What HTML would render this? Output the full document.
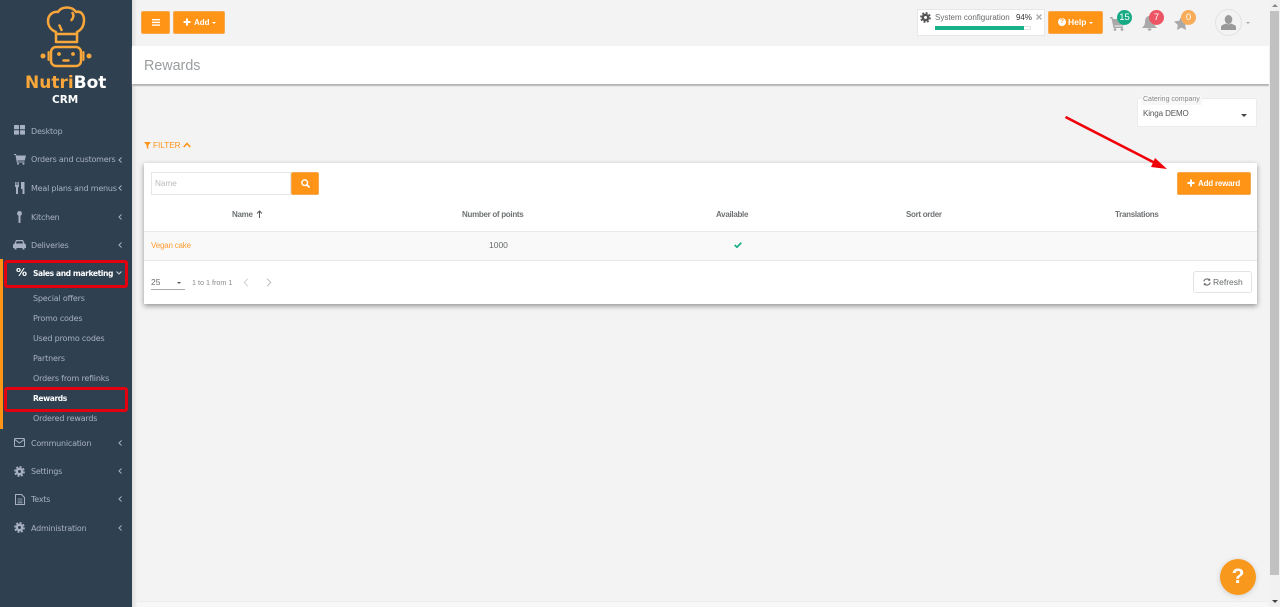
<!DOCTYPE html>
<html><head><meta charset="utf-8"><style>
*{box-sizing:border-box}
html,body{margin:0;padding:0;width:1280px;height:607px;overflow:hidden;background:#f3f3f4;font-family:"Liberation Sans",sans-serif;color:#676a6c}
.a{position:absolute;white-space:nowrap}
.nav{font-family:"DejaVu Sans","Liberation Sans",sans-serif;font-size:8px;letter-spacing:-.22px;color:#a7b1c2;left:31px;line-height:12px}
.sub{font-family:"DejaVu Sans","Liberation Sans",sans-serif;font-size:8px;letter-spacing:-.18px;color:#a7b1c2;left:33px;line-height:12px}
.act{font-family:"DejaVu Sans",sans-serif;font-weight:bold;font-size:7.6px;letter-spacing:-.42px;color:#fff}
.chev{left:118px;width:4px;height:6px}
.ic{position:absolute}
.btn{position:absolute;background:#ff9417;border:1px solid #f5a94e;border-radius:2px;color:#fff;font-weight:bold;font-size:9px;text-align:center}
.th{font-size:8px;font-weight:bold;letter-spacing:-.3px;color:#6f7274;line-height:12px}
.badge{position:absolute;border-radius:50%;width:15px;height:15px;color:#fff;font-size:9.5px;text-align:center;line-height:15px}
</style></head><body>
<!-- sidebar -->
<div class="a" style="left:0;top:0;width:132px;height:607px;background:#2f4050"></div>
<div class="a" style="left:132px;top:0;width:5px;height:607px;background:linear-gradient(90deg,#ddd,#f3f3f4)"></div>
<div class="a" style="left:0;top:259px;width:3px;height:170px;background:#ff9417"></div>
<svg class="ic" style="left:0;top:0" width="132" height="72" viewBox="0 0 132 72" fill="none" stroke="#f9a63a" stroke-width="2.500" stroke-linejoin="round" stroke-linecap="round">
<path d="M56 32C51 30 48 26 48 21C48 15 53 11 58 12C60 8.500 64 7.500 67 7.500C71 7.500 74 9 76 12C81 10.500 84 15 84 20C84 26 81 30 77 32V42H56Z"/>
<path d="M56 34H77"/><path d="M59.500 25.500L61.500 30"/><path d="M72.500 13C74 15 73.500 18 71.500 20"/>
<rect x="51" y="47" width="30" height="19" rx="5"/>
<path d="M63.500 60.500H68.500" stroke-width="2.400"/>
<path d="M48.500 52V60M83.500 52V60" stroke-width="2"/>
<circle cx="59" cy="54" r="1.400" fill="#f9a63a" stroke-width="1"/><circle cx="73" cy="54" r="1.400" fill="#f9a63a" stroke-width="1"/>
<circle cx="43" cy="56" r="1.300" fill="#f9a63a"/><circle cx="89" cy="56" r="1.300" fill="#f9a63a"/>
</svg>
<div class="a" style="left:25px;top:74px;font-family:'DejaVu Sans',sans-serif;font-weight:bold;font-size:17px;line-height:19px"><span style="color:#f9a63a">Nutri</span><span style="color:#fff">Bot</span></div>
<div class="a" style="left:52px;top:93px;font-family:'DejaVu Sans',sans-serif;font-weight:bold;font-size:10.500px;line-height:14px;color:#fff">CRM</div>

<svg class="ic" style="left:14px;top:125px" width="11" height="10" viewBox="0 0 11 10" fill="#a7b1c2"><rect width="5" height="4.300" rx=".6"/><rect x="6" width="5" height="4.300" rx=".6"/><rect y="5.300" width="5" height="4.300" rx=".6"/><rect x="6" y="5.300" width="5" height="4.300" rx=".6"/></svg>
<div class="a nav" style="top:126px">Desktop</div>
<svg class="ic" style="left:14px;top:154px" width="12" height="11" viewBox="0 0 12 11" fill="#a7b1c2"><path d="M0 0H2L2.500 1.500H12L10.800 6.500H3.500L3.700 7.500H10.500V8.500H2.800L1.500 1H0Z"/><circle cx="4" cy="9.800" r="1"/><circle cx="9.500" cy="9.800" r="1"/></svg>
<div class="a nav" style="top:154px">Orders and customers</div>
<svg class="ic" style="left:15px;top:182px" width="10" height="12" viewBox="0 0 10 12" fill="#a7b1c2"><path d="M0 0H.8V3H1.500V0H2.500V3H3.200V0H4V4.500L3 5.500V12H1V5.500L0 4.500Z"/><path d="M6 0H9.500V12H7.500V7H6Z"/></svg>
<div class="a nav" style="top:183px">Meal plans and menus</div>
<svg class="ic" style="left:17px;top:211px" width="5" height="12" viewBox="0 0 5 12" fill="#a7b1c2"><ellipse cx="2.500" cy="2.500" rx="2.400" ry="2.500"/><rect x="1.500" y="4" width="2" height="8" rx=".8"/></svg>
<div class="a nav" style="top:212px">Kitchen</div>
<svg class="ic" style="left:13px;top:239px" width="13" height="11" viewBox="0 0 13 11" fill="#a7b1c2"><path d="M3 1H10L11.500 4.500C12.500 5 13 5.500 13 6.500V9H11.500V10.500H9.500V9H3.500V10.500H1.500V9H0V6.500C0 5.500 .5 5 1.500 4.500ZM3.700 2.300L2.900 4.500H10.100L9.300 2.300Z"/></svg>
<div class="a nav" style="top:240px">Deliveries</div>
<div class="a" style="left:16px;top:266px;font-family:'DejaVu Sans',sans-serif;font-weight:bold;font-size:11px;line-height:14px;color:#fff;letter-spacing:-.3px">%</div>
<div class="a sub act" style="top:268px">Sales and marketing</div>
<svg class="ic" style="left:116px;top:271px" width="6" height="4" viewBox="0 0 6 4" fill="none" stroke="#c9d0da" stroke-width="1"><path d="M.5 .5L3 3L5.500 .5"/></svg>
<div class="a sub" style="top:293px">Special offers</div>
<div class="a sub" style="top:313px">Promo codes</div>
<div class="a sub" style="top:333px">Used promo codes</div>
<div class="a sub" style="top:353px">Partners</div>
<div class="a sub" style="top:373px">Orders from reflinks</div>
<div class="a sub act" style="top:393px">Rewards</div>
<div class="a sub" style="top:413px">Ordered rewards</div>
<svg class="ic" style="left:14px;top:438px" width="11" height="9" viewBox="0 0 11 9" fill="none" stroke="#a7b1c2" stroke-width="1"><rect x=".5" y=".5" width="10" height="8" rx="1"/><path d="M.8 1.500L5.500 5L10.200 1.500"/></svg>
<div class="a nav" style="top:438px">Communication</div>
<svg class="ic" style="left:14px;top:466px" width="11" height="11" viewBox="0 0 11 11"><circle cx="5.500" cy="5.500" r="3.900" fill="#a7b1c2"/><circle cx="5.500" cy="5.500" r="4.600" fill="none" stroke="#a7b1c2" stroke-width="1.600" stroke-dasharray="2 1.610"/><circle cx="5.500" cy="5.500" r="1.500" fill="#2f4050"/></svg>
<div class="a nav" style="top:466px">Settings</div>
<svg class="ic" style="left:15px;top:494px" width="10" height="11" viewBox="0 0 10 11" fill="none" stroke="#a7b1c2" stroke-width="1"><path d="M.5 .5H6.500L9.500 3.500V10.500H.5Z"/><path d="M2.500 5H7.500M2.500 7H7.500M2.500 8.800H7.500" stroke-width=".8"/></svg>
<div class="a nav" style="top:494px">Texts</div>
<svg class="ic" style="left:14px;top:522px" width="11" height="11" viewBox="0 0 11 11"><circle cx="5.500" cy="5.500" r="3.900" fill="#a7b1c2"/><circle cx="5.500" cy="5.500" r="4.600" fill="none" stroke="#a7b1c2" stroke-width="1.600" stroke-dasharray="2 1.610"/><circle cx="5.500" cy="5.500" r="1.500" fill="#2f4050"/></svg>
<div class="a nav" style="top:523px">Administration</div>
<svg class="ic chev" style="top:157px" viewBox="0 0 4 6" fill="none" stroke="#a7b1c2"><path d="M3.500 .5L1 3L3.500 5.500"/></svg>
<svg class="ic chev" style="top:185px" viewBox="0 0 4 6" fill="none" stroke="#a7b1c2"><path d="M3.500 .5L1 3L3.500 5.500"/></svg>
<svg class="ic chev" style="top:214px" viewBox="0 0 4 6" fill="none" stroke="#a7b1c2"><path d="M3.500 .5L1 3L3.500 5.500"/></svg>
<svg class="ic chev" style="top:242px" viewBox="0 0 4 6" fill="none" stroke="#a7b1c2"><path d="M3.500 .5L1 3L3.500 5.500"/></svg>
<svg class="ic chev" style="top:440px" viewBox="0 0 4 6" fill="none" stroke="#a7b1c2"><path d="M3.500 .5L1 3L3.500 5.500"/></svg>
<svg class="ic chev" style="top:468px" viewBox="0 0 4 6" fill="none" stroke="#a7b1c2"><path d="M3.500 .5L1 3L3.500 5.500"/></svg>
<svg class="ic chev" style="top:496px" viewBox="0 0 4 6" fill="none" stroke="#a7b1c2"><path d="M3.500 .5L1 3L3.500 5.500"/></svg>
<svg class="ic chev" style="top:525px" viewBox="0 0 4 6" fill="none" stroke="#a7b1c2"><path d="M3.500 .5L1 3L3.500 5.500"/></svg>
<!-- red highlights -->
<div class="a" style="left:4px;top:260px;width:124px;height:28px;border:3px solid #e3000f;border-radius:3px"></div>
<div class="a" style="left:4px;top:387px;width:124px;height:25px;border:3px solid #e3000f;border-radius:3px"></div>

<!-- top bar -->
<div class="btn" style="left:141px;top:11px;width:29px;height:23px"></div>
<svg class="ic" style="left:152px;top:19px" width="8" height="7" viewBox="0 0 8 7" fill="#fff"><rect width="8" height="1.400"/><rect y="2.700" width="8" height="1.400"/><rect y="5.400" width="8" height="1.400"/></svg>
<div class="btn" style="left:173px;top:11px;width:52px;height:23px"></div>
<svg class="ic" style="left:183px;top:18px" width="8" height="8" viewBox="0 0 8 8" fill="#fff"><path d="M3 .5H5V3H7.500V5H5V7.500H3V5H.5V3H3Z"/></svg>
<div class="a" style="left:194px;top:17px;font-size:8px;font-weight:bold;color:#fff;line-height:12px">Add</div>
<div class="a" style="left:212px;top:22px;border:2px solid transparent;border-top-color:#fff;border-bottom:0"></div>

<div class="a" style="left:917px;top:9px;width:128px;height:27px;background:#fff;border:1px solid #e7e7e7"></div>
<svg class="ic" style="left:920px;top:12px" width="11" height="11" viewBox="0 0 11 11"><circle cx="5.500" cy="5.500" r="3.900" fill="#555"/><circle cx="5.500" cy="5.500" r="4.600" fill="none" stroke="#555" stroke-width="1.600" stroke-dasharray="2 1.610"/><circle cx="5.500" cy="5.500" r="1.500" fill="#fff"/></svg>
<div class="a" style="left:935px;top:12px;font-size:8px;line-height:12px;color:#676a6c">System configuration</div>
<div class="a" style="left:1016px;top:12px;font-size:8px;letter-spacing:-.1px;line-height:12px;color:#333">94%</div>
<svg class="ic" style="left:1036px;top:14px" width="6" height="6" viewBox="0 0 6 6" stroke="#aaa" stroke-width="1.300"><path d="M.5 .5L5.500 5.500M5.500 .5L.5 5.500"/></svg>
<div class="a" style="left:935px;top:26px;width:96px;height:4px;border:1px solid #e5e5e5;background:#fff"></div>
<div class="a" style="left:935px;top:26px;width:89px;height:4px;background:#18b28a"></div>
<div class="btn" style="left:1048px;top:11px;width:55px;height:23px"></div>
<div class="a" style="left:1058px;top:18px;width:8px;height:8px;border-radius:50%;background:#fff"></div>
<div class="a" style="left:1058px;top:18px;width:8px;font-size:6.500px;font-weight:bold;color:#ff9417;line-height:8px;text-align:center">?</div>
<div class="a" style="left:1068px;top:16px;font-size:8.500px;font-weight:bold;color:#fff;line-height:12px">Help</div>
<div class="a" style="left:1089px;top:22px;border:2px solid transparent;border-top-color:#fff;border-bottom:0"></div>

<svg class="ic" style="left:1110px;top:17px" width="15" height="14" viewBox="0 0 15 14" fill="#a9a9a9"><path d="M0 0H2.500L3 2H15L13.500 8.500H4.500L4.700 9.500H13V11H3.500L1.500 1.500H0Z"/><circle cx="5" cy="12.500" r="1.400"/><circle cx="12" cy="12.500" r="1.400"/></svg>
<div class="badge" style="left:1117px;top:10px;background:#16ab85">15</div>
<svg class="ic" style="left:1142px;top:16px" width="15" height="15" viewBox="0 0 15 15" fill="#a9a9a9"><path d="M7.500 0C11 0 12 3 12 6C12 9 13.500 10.500 15 12H0C1.500 10.500 3 9 3 6C3 3 4 0 7.500 0Z"/><path d="M5.500 12.500H9.500C9.500 15.500 5.500 15.500 5.500 12.500Z"/></svg>
<div class="badge" style="left:1149px;top:10px;background:#ed5565">7</div>
<svg class="ic" style="left:1174px;top:16px" width="15" height="14" viewBox="0 0 15 14" fill="#a9a9a9"><path d="M7.500 0L9.800 4.700L15 5.400L11.200 9L12.100 14L7.500 11.600L2.900 14L3.800 9L0 5.400L5.200 4.700Z"/></svg>
<div class="badge" style="left:1181px;top:10px;background:#f8ac59">0</div>
<div class="a" style="left:1215px;top:9px;width:27px;height:27px;border-radius:50%;border:1px solid #e2e2e2;background:#f3f3f4"></div>
<svg class="ic" style="left:1221px;top:15px" width="15" height="15" viewBox="0 0 15 15" fill="#9a9a9a"><ellipse cx="7.500" cy="4.500" rx="3.800" ry="4.500"/><path d="M0 15V12C0 10 3 9.500 5 8.500C6.500 9.500 8.500 9.500 10 8.500C12 9.500 15 10 15 12V15Z"/></svg>
<div class="a" style="left:1246px;top:22px;border:2px solid transparent;border-top-color:#aaa;border-bottom:0"></div>

<!-- heading -->
<div class="a" style="left:132px;top:46px;width:1137px;height:38px;background:#fff;box-shadow:0 2px 1px #b5b5b5"></div>
<div class="a" style="left:144px;top:56px;font-size:14.300px;line-height:20px;color:#9a9d9f">Rewards</div>

<!-- select -->
<div class="a" style="left:1137px;top:98px;width:120px;height:29px;background:#fff;border:1px solid #ececec;border-radius:2px"></div>
<div class="a" style="left:1141px;top:95px;background:#f7f7f7;padding:0 2px;font-size:7px;line-height:10px;color:#8a8a8a">Catering company</div>
<div class="a" style="left:1143px;top:108px;font-size:8px;letter-spacing:-.1px;line-height:12px;color:#555">Kinga DEMO</div>
<div class="a" style="left:1241px;top:114px;border:3px solid transparent;border-top-color:#444;border-bottom:0"></div>

<!-- filter -->
<svg class="ic" style="left:144px;top:142px" width="7" height="7" viewBox="0 0 7 7" fill="#ff9417"><path d="M0 0H7L4.300 3.200V7L2.700 6V3.200Z"/></svg>
<div class="a" style="left:153px;top:140px;font-size:8.200px;line-height:12px;color:#ff9417">FILTER</div>
<svg class="ic" style="left:183px;top:142px" width="8" height="6" viewBox="0 0 8 6" fill="none" stroke="#ff9417" stroke-width="1.600"><path d="M.7 5L4 1.500L7.300 5"/></svg>

<!-- panel -->
<div class="a" style="left:144px;top:163px;width:1113px;height:141px;background:#fff;box-shadow:0 2px 5px rgba(0,0,0,.4)"></div>
<div class="a" style="left:151px;top:172px;width:140px;height:23px;background:#fff;border:1px solid #e5e6e7"></div>
<div class="a" style="left:155px;top:178px;font-size:8.200px;line-height:12px;color:#bbb">Name</div>
<div class="btn" style="left:291px;top:172px;width:28px;height:23px"></div>
<svg class="ic" style="left:301px;top:179px" width="9" height="9" viewBox="0 0 9 9" fill="none" stroke="#fff" stroke-width="1.500"><circle cx="3.700" cy="3.700" r="2.800"/><path d="M5.800 5.800L8.500 8.500" stroke-width="1.800"/></svg>
<div class="btn" style="left:1177px;top:172px;width:74px;height:23px"></div>
<svg class="ic" style="left:1187px;top:179px" width="8" height="8" viewBox="0 0 8 8" fill="#fff"><path d="M3 .5H5V3H7.500V5H5V7.500H3V5H.5V3H3Z"/></svg>
<div class="a" style="left:1198px;top:178px;font-size:8px;font-weight:bold;letter-spacing:-.2px;line-height:12px;color:#fff">Add reward</div>

<div class="a th" style="left:232px;top:209px">Name</div>
<svg class="ic" style="left:256px;top:210px" width="7" height="8" viewBox="0 0 7 8" fill="none" stroke="#555" stroke-width="1"><path d="M3.500 8V1M1 3.500L3.500 1L6 3.500"/></svg>
<div class="a th" style="left:462px;top:209px">Number of points</div>
<div class="a th" style="left:716px;top:209px">Available</div>
<div class="a th" style="left:906px;top:209px">Sort order</div>
<div class="a th" style="left:1115px;top:209px">Translations</div>
<div class="a" style="left:144px;top:231px;width:1113px;height:30px;background:#f9f9f9;border-top:1px solid #ebebeb;border-bottom:1px solid #e7e7e7"></div>
<div class="a" style="left:151px;top:240px;font-size:8px;letter-spacing:-.2px;line-height:12px;color:#ff9c33">Vegan cake</div>
<div class="a" style="left:489px;top:239px;font-size:8.500px;line-height:12px;color:#676a6c">1000</div>
<svg class="ic" style="left:734px;top:242px" width="8" height="6" viewBox="0 0 8 6" fill="none" stroke="#16ab85" stroke-width="1.700"><path d="M.7 3L3 5.200L7.300 .7"/></svg>

<div class="a" style="left:151px;top:276px;font-size:8.500px;line-height:12px;color:#676a6c">25</div>
<div class="a" style="left:177px;top:282px;border:2.500px solid transparent;border-top-color:#555;border-bottom:0"></div>
<div class="a" style="left:151px;top:289px;width:34px;height:1px;background:#aaa"></div>
<div class="a" style="left:192px;top:277px;font-size:7.200px;line-height:12px;color:#8a8a8a">1 to 1 from 1</div>
<svg class="ic" style="left:243px;top:278px" width="6" height="9" viewBox="0 0 6 9" fill="none" stroke="#d0d0d0"><path d="M5 .7L1.200 4.500L5 8.300"/></svg>
<svg class="ic" style="left:266px;top:278px" width="6" height="9" viewBox="0 0 6 9" fill="none" stroke="#bbb"><path d="M1 .7L4.800 4.500L1 8.300"/></svg>
<div class="a" style="left:1193px;top:271px;width:59px;height:22px;border:1px solid #e3e3e3;border-radius:3px;background:#fff"></div>
<svg class="ic" style="left:1203px;top:278px" width="8" height="8" viewBox="0 0 8 8" fill="none" stroke="#666" stroke-width="1.100"><path d="M.8 3.500A3.300 3.300 0 0 1 6.700 2.300M7.200 4.500A3.300 3.300 0 0 1 1.300 5.700"/><path d="M7.200 .4V2.800H4.800M.8 7.600V5.200H3.200" fill="#666" stroke="none"/></svg>
<div class="a" style="left:1213px;top:276px;font-size:8.500px;line-height:12px;color:#676a6c">Refresh</div>

<!-- arrow -->
<svg class="ic" style="left:1060px;top:110px" width="110" height="65" viewBox="1060 110 110 65"><path d="M1065.500 117L1156 163.500" stroke="#f00008" stroke-width="2.600"/><path d="M1167 169L1151 167L1155 158Z" fill="#f00008"/></svg>

<!-- bottom + scrollbar -->
<div class="a" style="left:137px;top:601px;width:1132px;height:6px;background:#f7f7f7;border-top:1px solid #ededed"></div>
<div class="a" style="left:1269px;top:0;width:11px;height:607px;background:#f1f1f1"></div>
<div class="a" style="left:1270px;top:11px;width:9px;height:564px;background:#c1c1c1"></div>
<div class="a" style="left:1272px;top:4px;border:3px solid transparent;border-bottom-color:#888;border-top:0"></div>
<div class="a" style="left:1272px;top:600px;border:3px solid transparent;border-top-color:#444;border-bottom:0"></div>
<!-- help -->
<div class="a" style="left:1220px;top:559px;width:36px;height:36px;border-radius:50%;background:#f8981d;box-shadow:0 1px 6px rgba(0,0,0,.15);color:#fff;font-size:21px;font-weight:bold;text-align:center;line-height:36px">?</div>
</body></html>
